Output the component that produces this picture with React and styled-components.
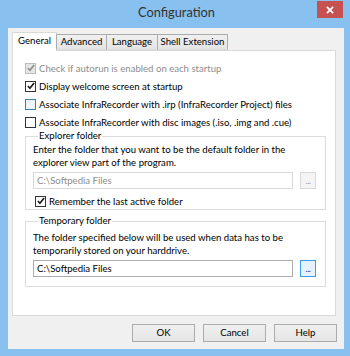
import React from "react";
import styled, { createGlobalStyle } from "styled-components";

const GlobalStyle = createGlobalStyle`
  html, body { margin: 0; padding: 0; background: #88c0ef; }
  body { font-family: Lato, "Noto Sans", sans-serif; font-size: 9.6px; color: #000; }
`;

const tabs = [
  { label: "General", width: 45 },
  { label: "Advanced", width: 51 },
  { label: "Language", width: 52 },
  { label: "Shell Extension", width: 71 },
];

function CheckBox({ checked, disabled, hot }) {
  return (
    <Box $disabled={disabled} $hot={hot}>
      {checked && (
        <svg width="8" height="8" viewBox="0 0 9 9">
          <path d="M1 4.5 L3.3 7 L8 1.2" fill="none" stroke={disabled ? "#8d8d8d" : "#1a1a1a"} strokeWidth="1.9" />
        </svg>
      )}
    </Box>
  );
}

export default function App() {
  return (
    <>
      <GlobalStyle />
      <Window>
        <TitleBar>
          <Title>Configuration</Title>
          <CloseButton>
            <svg width="8" height="8" viewBox="0 0 9 9">
              <path d="M1 1 L8 8 M8 1 L1 8" stroke="#fff" strokeWidth="2" />
            </svg>
          </CloseButton>
        </TitleBar>
        <Client>
          <TabStrip>
            {tabs.map((t, i) => (
              <Tab key={t.label} $active={i === 0} $width={t.width}>{t.label}</Tab>
            ))}
          </TabStrip>
          <Panel>
            <CheckRow $disabled>
              <CheckBox checked disabled />
              Check if autorun is enabled on each startup
            </CheckRow>
            <CheckRow>
              <CheckBox checked />
              Display welcome screen at startup
            </CheckRow>
            <CheckRow>
              <CheckBox hot />
              Associate InfraRecorder with .irp (InfraRecorder Project) files
            </CheckRow>
            <CheckRow>
              <CheckBox />
              Associate InfraRecorder with disc images (.iso, .img and .cue)
            </CheckRow>

            <Group $top={-1}>
              <Legend>Explorer folder</Legend>
              <Info>
                Enter the folder that you want to be the default folder in the
                <br />
                explorer view part of the program.
              </Info>
              <PathRow>
                <PathInput $disabled>C:\Softpedia Files</PathInput>
                <BrowseButton $disabled>...</BrowseButton>
              </PathRow>
              <CheckRow $inner>
                <CheckBox checked />
                Remember the last active folder
              </CheckRow>
            </Group>

            <Group $top={5}>
              <Legend>Temporary folder</Legend>
              <Info $gap={4}>
                The folder specified below will be used when data has to be
                <br />
                temporarily stored on your harddrive.
              </Info>
              <PathRow $bottom={9}>
                <PathInput>C:\Softpedia Files</PathInput>
                <BrowseButton $focus>...</BrowseButton>
              </PathRow>
            </Group>
          </Panel>
          <ButtonBar>
            <DialogButton>OK</DialogButton>
            <DialogButton>Cancel</DialogButton>
            <DialogButton>Help</DialogButton>
          </ButtonBar>
        </Client>
      </Window>
    </>
  );
}

const Window = styled.div`
  width: 350px;
  height: 356px;
  box-sizing: border-box;
  background: #88c0ef;
  padding: 0 6px 7px 8px;
  display: flex;
  flex-direction: column;
`;

const TitleBar = styled.div`
  height: 28px;
  display: flex;
  align-items: flex-start;
  justify-content: center;
  position: relative;
`;

const Title = styled.div`
  margin-top: 4px;
  font-family: Lato, "Noto Sans", sans-serif;
  font-size: 12.8px;
  color: #333;
  margin-left: 1px;
`;

const CloseButton = styled.div`
  position: absolute;
  top: 1px;
  right: 1px;
  width: 26px;
  height: 17px;
  background: #c75050;
  display: flex;
  align-items: center;
  justify-content: center;
`;

const Client = styled.div`
  flex: 1;
  background: #f0f0f0;
  padding: 4px 8px 7px 4px;
  display: flex;
  flex-direction: column;
`;

const TabStrip = styled.div`
  display: flex;
  align-items: flex-end;
  height: 18px;
  position: relative;
  z-index: 1;
`;

const Tab = styled.div`
  box-sizing: border-box;
  width: ${(p) => p.$width}px;
  height: ${(p) => (p.$active ? "19px" : "16px")};
  margin-bottom: ${(p) => (p.$active ? "-1px" : "0")};
  padding-top: ${(p) => (p.$active ? "1px" : "0")};
  border: 1px solid ${(p) => (p.$active ? "#d9d9d9" : "#acacac")};
  border-bottom: ${(p) => (p.$active ? "none" : "1px solid #d9d9d9")};
  margin-left: ${(p) => (p.$active ? "0" : "-1px")};
  background: ${(p) => (p.$active ? "#fff" : "linear-gradient(#f0f0f0, #e5e5e5)")};
  line-height: 14px;
  text-align: center;
  white-space: nowrap;
  &:first-child { margin-left: 0; }
`;

const Panel = styled.div`
  box-sizing: border-box;
  height: 266px;
  background: #fff;
  border: 1px solid #d9d9d9;
  padding: 8px 9px 0 12px;
  display: flex;
  flex-direction: column;
`;

const CheckRow = styled.div`
  display: flex;
  align-items: center;
  height: ${(p) => (p.$inner ? "16px" : "18px")};
  gap: 3px;
  white-space: nowrap;
  color: ${(p) => (p.$disabled ? "#8d8d8d" : "#000")};
  margin-left: ${(p) => (p.$inner ? "2px" : "0")};
`;

const Box = styled.div`
  box-sizing: border-box;
  width: 11px;
  height: 11px;
  flex: none;
  border: 1px solid ${(p) => (p.$disabled ? "#bcbcbc" : p.$hot ? "#3c7fb1" : "#333")};
  background: ${(p) => (p.$disabled ? "#e6e6e6" : p.$hot ? "#eef5fc" : "#fff")};
  display: flex;
  align-items: center;
  justify-content: center;
`;

const Group = styled.fieldset`
  margin: ${(p) => p.$top}px 0 0 0;
  border: 1px solid #dcdcdc;
  border-radius: 0;
  padding: 0 9px 0 7px;
  min-width: 0;
`;

const Legend = styled.legend`
  padding: 0 1px;
  margin-left: 5px;
  line-height: 12px;
`;

const Info = styled.div`
  line-height: 13px;
  margin-top: ${(p) => p.$gap || 1}px;
`;

const PathRow = styled.div`
  display: flex;
  gap: 7px;
  margin: 3px 0 ${(p) => p.$bottom || 4}px 0;
`;

const PathInput = styled.div`
  box-sizing: border-box;
  width: 260px;
  height: 17px;
  border: 1px solid ${(p) => (p.$disabled ? "#d9d9d9" : "#abadb3")};
  background: #fff;
  color: ${(p) => (p.$disabled ? "#8d8d8d" : "#000")};
  padding-left: 3px;
  line-height: 15px;
`;

const BrowseButton = styled.div`
  box-sizing: border-box;
  width: 16px;
  height: 17px;
  border: 1px solid ${(p) => (p.$focus ? "#3c9cf0" : "#d9d9d9")};
  background: ${(p) => (p.$focus ? "#e5f1fb" : "#f4f4f4")};
  color: ${(p) => (p.$disabled ? "#a0a0a0" : "#1a3c8a")};
  font-size: 9px;
  line-height: 15px;
  text-align: center;
  letter-spacing: -0.5px;
`;

const ButtonBar = styled.div`
  display: flex;
  justify-content: flex-end;
  gap: 8px;
  margin-top: 8px;
  margin-right: -1px;
`;

const DialogButton = styled.div`
  box-sizing: border-box;
  width: 63px;
  height: 18px;
  border: 1px solid #acacac;
  background: linear-gradient(#f0f0f0, #e5e5e5);
  text-align: center;
  line-height: 16px;
`;
